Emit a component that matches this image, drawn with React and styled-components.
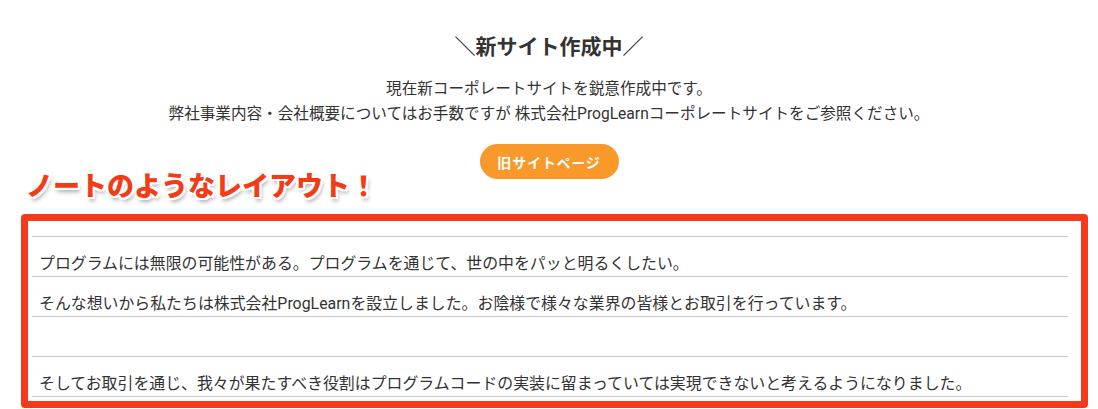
import React from "react";
import styled, { createGlobalStyle } from "styled-components";

const Global = createGlobalStyle`
  html, body { margin: 0; padding: 0; background: #fff; }
  body {
    font-family: Roboto, "Noto Sans CJK JP", sans-serif;
    color: #333;
  }
`;

const Page = styled.div`
  position: relative;
  width: 1098px;
  height: 409px;
  overflow: hidden;
  display: flex;
  flex-direction: column;
  align-items: center;
  padding-top: 32px;
  box-sizing: border-box;
`;

const Title = styled.h2`
  margin: 0;
  font-size: 21px;
  line-height: 30px;
  font-weight: 700;
  color: #333;
`;

const Lead = styled.p`
  margin: 15px 0 0;
  font-size: 15.6px;
  line-height: 25px;
  text-align: center;
  color: #333;
`;

const OldSiteButton = styled.a`
  margin-top: 17px;
  display: inline-flex;
  align-items: center;
  justify-content: center;
  height: 35px;
  width: 139px;
  border-radius: 18px;
  background: #f8992a;
  color: #fff;
  font-size: 14px;
  letter-spacing: 0.8px;
  font-weight: 700;
  text-decoration: none;
`;

const Note = styled.div`
  align-self: flex-start;
  margin: 35px 0 0 21px;
  width: 1067px;
  box-sizing: border-box;
  border: 7px solid #f5391a;
  border-radius: 4px;
  padding: 0 13px 4px 4px;
  background: #fff;
`;

const Spacer = styled.div`
  height: 15px;
  border-bottom: 1px solid #c8c8c8;
`;

const Row = styled.div`
  height: 39px;
  border-bottom: 1px solid #c8c8c8;
  display: flex;
  align-items: flex-end;
  padding-left: 7px;
  font-size: 15.9px;
  line-height: 24px;
  color: #333;
  white-space: nowrap;
`;

const Annotation = styled.div`
  position: absolute;
  left: 26px;
  top: 167px;
  font-size: 27px;
  line-height: 36px;
  font-weight: 900;
  font-family: "Noto Sans CJK JP", sans-serif;
  color: #f23c17;
  text-shadow:
    -2px -2px 0 #fff, 2px -2px 0 #fff, -2px 2px 0 #fff, 2px 2px 0 #fff,
    0 -2px 0 #fff, 0 2px 0 #fff, -2px 0 0 #fff, 2px 0 0 #fff,
    2px 4px 4px rgba(0, 0, 0, 0.35);
  white-space: nowrap;
`;

const rows = [
  "プログラムには無限の可能性がある。プログラムを通じて、世の中をパッと明るくしたい。",
  "そんな想いから私たちは株式会社ProgLearnを設立しました。お陰様で様々な業界の皆様とお取引を行っています。",
  "",
  "そしてお取引を通じ、我々が果たすべき役割はプログラムコードの実装に留まっていては実現できないと考えるようになりました。",
];

export default function App() {
  return (
    <>
      <Global />
      <Page>
        <Title>＼新サイト作成中／</Title>
        <Lead>
          現在新コーポレートサイトを鋭意作成中です。
          <br />
          弊社事業内容・会社概要についてはお手数ですが 株式会社ProgLearnコーポレートサイトをご参照ください。
        </Lead>
        <OldSiteButton href="#">旧サイトページ</OldSiteButton>
        <Note>
          <Spacer />
          {rows.map((t, i) => (
            <Row key={i}>{t}</Row>
          ))}
        </Note>
        <Annotation>ノートのようなレイアウト！</Annotation>
      </Page>
    </>
  );
}
